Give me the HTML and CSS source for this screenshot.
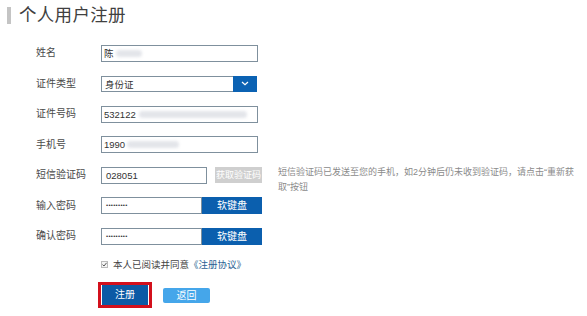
FILE: index.html
```html
<!DOCTYPE html>
<html lang="zh">
<head>
<meta charset="utf-8">
<title>个人用户注册</title>
<link rel="stylesheet" href="styles.css">
</head>
<body>
<div class="title"><span class="title-bar"></span><span class="title-text">个人用户注册</span></div>
<div class="form">
  <div class="label">姓名</div>
  <div class="field"><div class="input w-full">陈<span class="blur b-name"></span></div></div>

  <div class="label">证件类型</div>
  <div class="field"><div class="select"><span class="select-text">身份证</span><span class="select-btn"><svg width="8" height="5" viewBox="0 0 8 5"><path d="M1 1 L4 3.8 L7 1" fill="none" stroke="#fff" stroke-width="1.2"/></svg></span></div></div>

  <div class="label">证件号码</div>
  <div class="field"><div class="input w-full">532122<span class="blur b-id"></span></div></div>

  <div class="label">手机号</div>
  <div class="field"><div class="input w-full">1990<span class="blur b-phone"></span></div></div>

  <div class="label">短信验证码</div>
  <div class="field">
    <div class="input w-sms">028051</div>
    <div class="btn-gray">获取验证码</div>
    <div class="help">短信验证码已发送至您的手机，如2分钟后仍未收到验证码，请点击“重新获取”按钮</div>
  </div>

  <div class="label">输入密码</div>
  <div class="field"><div class="input w-pwd dots">•••••••••</div><div class="btn-blue">软键盘</div></div>

  <div class="label">确认密码</div>
  <div class="field"><div class="input w-pwd dots">•••••••••</div><div class="btn-blue">软键盘</div></div>
</div>
<div class="agree">
  <span class="check"><svg width="7" height="7" viewBox="0 0 7 7"><rect x="0.5" y="0.5" width="6" height="6" fill="#f4f4f4" stroke="#bbb"/><path d="M1.5 3.6 L3 5 L5.6 1.8" fill="none" stroke="#555" stroke-width="1"/></svg></span>
  <span class="agree-text">本人已阅读并同意<span class="link">《注册协议》</span></span>
</div>
<div class="actions">
  <div class="highlight"><div class="btn-submit">注册</div></div>
  <div class="btn-back">返回</div>
</div>
</body>
</html>
```
FILE: styles.css
```css
html, body {
  margin: 0;
  padding: 0;
  background: #fff;
}
body {
  font-family: "Liberation Sans", "Noto Sans CJK SC", sans-serif;
  color: #333;
  width: 587px;
  height: 316px;
  overflow: hidden;
}
.title {
  display: flex;
  align-items: center;
  margin: 7px 0 0 7px;
  height: 17px;
}
.title-bar {
  width: 4px;
  height: 17px;
  background: #c4c4c4;
}
.title-text {
  margin-left: 8px;
  font-size: 17.5px;
  line-height: 17px;
  color: #404040;
  letter-spacing: 0.3px;
}
.form {
  display: grid;
  grid-template-columns: 65px auto;
  grid-auto-rows: 18px;
  row-gap: 12.5px;
  margin-top: 20px;
  padding-left: 36px;
}
.label {
  font-size: 10px;
  line-height: 18px;
  color: #4a4a4a;
}
.field {
  display: flex;
  align-items: center;
  height: 18px;
  position: relative;
}
.input {
  box-sizing: border-box;
  height: 17px;
  border: 1px solid #7f909d;
  font-size: 9.5px;
  line-height: 15px;
  padding-left: 2px;
  color: #333;
  display: flex;
  align-items: center;
  white-space: nowrap;
}
.w-full { width: 157px; }
.w-sms { width: 106px; padding-left: 4px; }
.w-pwd { width: 101px; }
.dots {
  font-size: 6px;
  letter-spacing: 0.3px;
  padding-left: 4px;
}
.blur {
  display: inline-block;
  height: 7px;
  background: #e3e5ea;
  border-radius: 4px;
  filter: blur(1.5px);
}
.b-name { width: 26px; margin-left: 2px; }
.b-id { width: 108px; margin-left: 3px; }
.b-phone { width: 52px; margin-left: 2px; }
.select {
  box-sizing: border-box;
  width: 156px;
  height: 16px;
  border: 1px solid #7f909d;
  display: flex;
  align-items: center;
}
.select-text {
  flex: 1;
  font-size: 9.5px;
  padding-left: 3px;
}
.select-btn {
  width: 24px;
  height: 16px;
  margin-right: -1px;
  background: #0b62b3;
  display: flex;
  align-items: center;
  justify-content: center;
}
.btn-gray {
  margin-left: 8px;
  width: 47px;
  height: 16px;
  background: #cfcfcf;
  color: #fff;
  font-size: 9px;
  line-height: 16px;
  text-align: center;
  white-space: nowrap;
}
.help {
  position: absolute;
  left: 177px;
  top: -1px;
  width: 305px;
  font-size: 9px;
  line-height: 15px;
  color: #8a8a8a;
}
.btn-blue {
  width: 60px;
  height: 17px;
  background: #0b5fae;
  color: #fff;
  font-size: 10px;
  line-height: 17px;
  text-align: center;
}
.agree {
  display: flex;
  align-items: center;
  height: 14px;
  margin-top: 12px;
  padding-left: 101px;
}
.check {
  display: flex;
  width: 7px;
  height: 7px;
}
.agree-text {
  margin-left: 5px;
  font-size: 9.5px;
  color: #444;
}
.link { color: #2a5f93; }
.actions {
  display: flex;
  align-items: center;
  margin-top: 11px;
  padding-left: 98px;
}
.highlight {
  border: 3px solid #d3101c;
  padding: 0 1px;
  height: 20px;
}
.btn-submit {
  width: 46px;
  height: 20px;
  background: #0c5aa5;
  color: #fff;
  font-size: 10px;
  line-height: 20px;
  text-align: center;
}
.btn-back {
  margin-left: 11px;
  width: 47px;
  height: 15px;
  background: #45a6ea;
  border-radius: 2px;
  color: #fff;
  font-size: 10px;
  line-height: 15px;
  text-align: center;
}
```
